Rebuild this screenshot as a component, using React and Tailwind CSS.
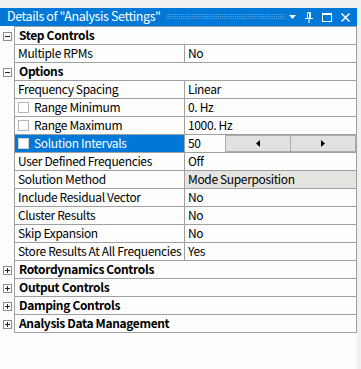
import React from 'react';

const rows = [
    { type: 'cat', label: 'Step Controls', open: true },
    { type: 'prop', label: 'Multiple RPMs', value: 'No' },
    { type: 'cat', label: 'Options', open: true },
    { type: 'prop', label: 'Frequency Spacing', value: 'Linear' },
    { type: 'prop', label: 'Range Minimum', value: '0. Hz', check: true },
    { type: 'prop', label: 'Range Maximum', value: '1000. Hz', check: true },
    { type: 'prop', label: 'Solution Intervals', value: '50', check: true, selected: true },
    { type: 'prop', label: 'User Defined Frequencies', value: 'Off' },
    { type: 'prop', label: 'Solution Method', value: 'Mode Superposition', readonly: true },
    { type: 'prop', label: 'Include Residual Vector', value: 'No' },
    { type: 'prop', label: 'Cluster Results', value: 'No' },
    { type: 'prop', label: 'Skip Expansion', value: 'No' },
    { type: 'prop', label: 'Store Results At All Frequencies', value: 'Yes' },
    { type: 'cat', label: 'Rotordynamics Controls' },
    { type: 'cat', label: 'Output Controls' },
    { type: 'cat', label: 'Damping Controls' },
    { type: 'cat', label: 'Analysis Data Management' },
];

function ToggleBox({ open }) {
    return (
        <div className="relative w-[9px] h-[9px] border border-[#8e8e8e] bg-white">
            <div className="absolute left-[1px] top-[3px] w-[5px] h-px bg-[#222]" />
            {!open && <div className="absolute left-[3px] top-[1px] w-px h-[5px] bg-[#222]" />}
        </div>
    );
}

function Spinner() {
    return (
        <div className="flex h-full flex-1">
            <div className="flex flex-1 items-center justify-center border border-[#adadad] bg-[#e1e1e1]">
                <svg width="4" height="7" viewBox="0 0 4 7"><path d="M4 0 L0 3.5 L4 7 Z" fill="#000" /></svg>
            </div>
            <div className="flex flex-1 items-center justify-center border border-l-0 border-[#adadad] bg-[#e1e1e1]">
                <svg width="4" height="7" viewBox="0 0 4 7"><path d="M0 0 L4 3.5 L0 7 Z" fill="#000" /></svg>
            </div>
        </div>
    );
}

export default function App() {
    return (
        <div className="w-[361px] h-[369px] bg-[#f0f0f0] pt-2 font-['Noto_Sans_CJK_KR','Noto_Sans',sans-serif] text-[12px] leading-[14px] tracking-[-0.35px] text-black">
            <div className="w-[357px] h-[361px] bg-[#fdfdfd]">
                {/* Title bar */}
                <div className="flex h-[18px] items-center bg-[#0078d7] pl-[7px] pr-[7px] text-white">
                    <span className="pb-[2px] text-[12.5px] leading-[14px] tracking-[-0.4px] whitespace-nowrap">Details of "Analysis Settings"</span>
                    <svg className="ml-[5px] flex-1" height="6" viewBox="0 0 128 6" preserveAspectRatio="none">
                        <defs>
                            <pattern id="grip" width="2" height="2" patternUnits="userSpaceOnUse">
                                <rect x="0" y="0" width="1" height="1" fill="#5ea8e8" />
                            </pattern>
                        </defs>
                        <rect x="0" y="0" width="128" height="6" fill="url(#grip)" />
                    </svg>
                    <div className="ml-[4px] flex items-center gap-[9px]">
                        <svg width="7" height="4" viewBox="0 0 7 4"><path d="M0 0 L7 0 L3.5 4 Z" fill="#fff" /></svg>
                        <svg width="8" height="11" viewBox="0 0 8 11" fill="none" stroke="#fff">
                            <path d="M2.5 0.5 H5.5 V6.5 H2.5 Z" />
                            <path d="M0 6.5 H8" />
                            <path d="M4 7 V11" />
                            <path d="M4.5 1 V6" />
                        </svg>
                        <svg width="10" height="9" viewBox="0 0 10 9" fill="none" stroke="#fff">
                            <rect x="0.5" y="0.5" width="9" height="8" />
                            <path d="M0 1.5 H10" />
                        </svg>
                        <svg width="9" height="9" viewBox="0 0 9 9" stroke="#fff" strokeWidth="1.5">
                            <path d="M0.5 0.5 L8.5 8.5 M8.5 0.5 L0.5 8.5" />
                        </svg>
                    </div>
                </div>

                {/* Property grid */}
                <div className="ml-[14px] h-px bg-[#a0a0a0]" />
                {rows.map((r, i) => (
                    <div key={i} className="flex h-[18px]">
                        <div className="flex w-[14px] shrink-0 items-center pl-[3px]">
                            {r.type === 'cat' && <ToggleBox open={r.open} />}
                        </div>
                        {r.type === 'cat' ? (
                            <div className="flex flex-1 items-center border-x border-b border-[#a0a0a0] pb-[2px] pl-[4px] font-bold">
                                {r.label}
                            </div>
                        ) : (
                            <div className="flex flex-1 border-x border-b border-[#a0a0a0]">
                                <div className={`flex w-[170px] shrink-0 items-center border-r border-[#a0a0a0] pl-[3px] whitespace-nowrap ${r.selected ? 'bg-[#0078d7] text-white' : ''}`}>
                                    {r.check && (
                                        <div className={`mr-[5px] w-[11px] h-[11px] border bg-white ${r.selected ? 'border-[#d0d0d0]' : 'border-[#b4b4b4]'}`} />
                                    )}
                                    <span className="pb-[2px]">{r.label}</span>
                                </div>
                                {r.selected ? (
                                    <div className="flex flex-1 items-center">
                                        <span className="w-[40px] pb-[2px] pl-[3px]">{r.value}</span>
                                        <Spinner />
                                    </div>
                                ) : (
                                    <div className={`flex flex-1 items-center pl-[3px] ${r.readonly ? 'bg-[#e5e4e1]' : ''}`}>
                                        <span className="pb-[2px]">{r.value}</span>
                                    </div>
                                )}
                            </div>
                        )}
                    </div>
                ))}
            </div>
        </div>
    );
}
